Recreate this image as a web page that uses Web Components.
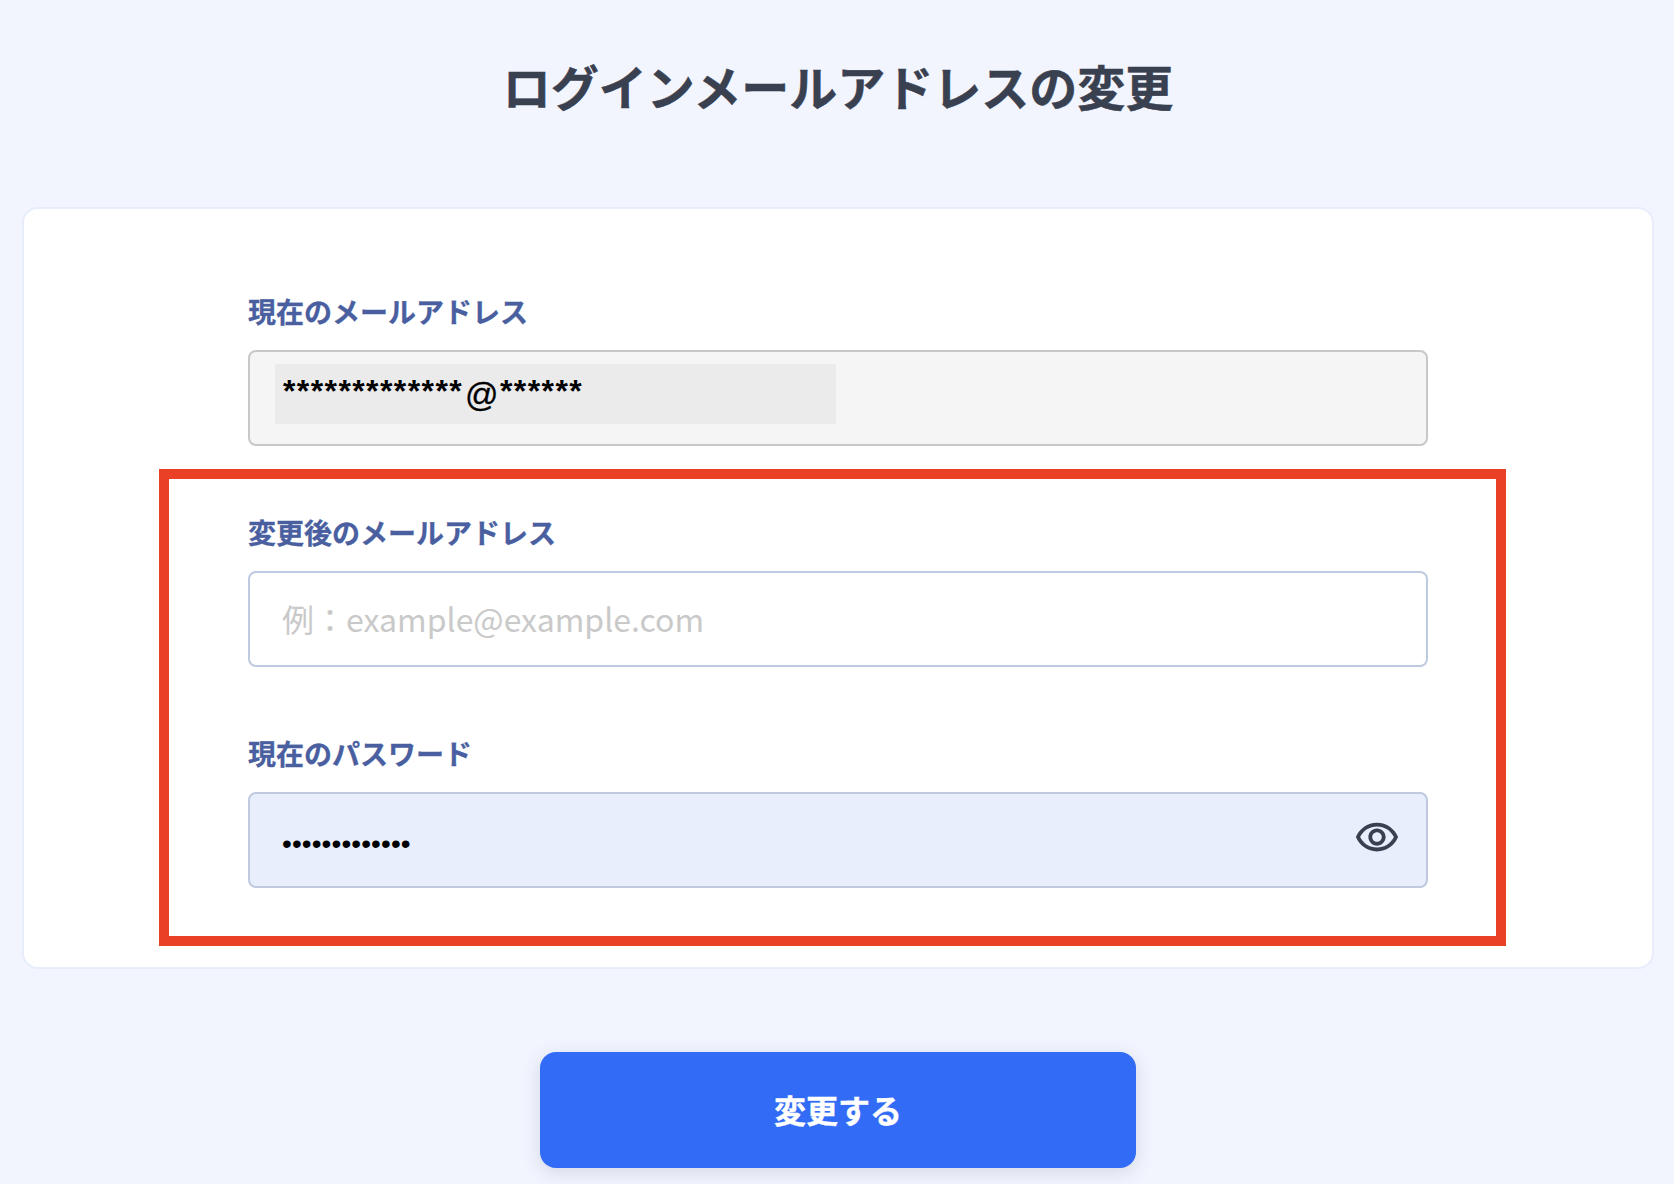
<!DOCTYPE html>
<html lang="ja">
<head>
<meta charset="utf-8">
<title>ログインメールアドレスの変更</title>
<style>
  html, body { margin: 0; background: #f2f5fe; }
  body { font-family: "Noto Sans CJK JP", "Noto Sans", sans-serif; }
  .at { margin-left: 2px; font-size: 33px; vertical-align: -4px; font-weight: 400; -webkit-text-stroke: .3px #000; }
</style>
</head>
<body>
<mail-change-page>
  <form-card>
    <form-field label="現在のメールアドレス" variant="disabled">
      <span class="masked">*************<span class="at">@</span>******</span>
    </form-field>
    <red-highlight>
      <form-field label="変更後のメールアドレス" variant="empty">例：example@example.com</form-field>
      <form-field label="現在のパスワード" variant="filled" eye>•••••••••••••</form-field>
    </red-highlight>
  </form-card>
  <primary-button>変更する</primary-button>
</mail-change-page>

<script>
class MailChangePage extends HTMLElement {
  constructor() {
    super();
    this.attachShadow({ mode: "open" });
    this.shadowRoot.innerHTML = `
    <style>
    :host {
      display: flex;
      flex-direction: column;
      align-items: center;
      height: 1184px;
      overflow: hidden;
      background: #f2f5fe;
    }
    h1 {
      margin: 49px 0 86px 2px;
      font-size: 48px;
      line-height: 72px;
      font-weight: 700;
      color: #394050;
      -webkit-text-stroke: .5px #394050;
    }
    </style>
    <h1>ログインメールアドレスの変更</h1>
    <slot></slot>`;
  }
}

class FormCard extends HTMLElement {
  constructor() {
    super();
    this.attachShadow({ mode: "open" });
    this.shadowRoot.innerHTML = `
    <style>
    :host {
      display: block;
      box-sizing: border-box;
      width: 1632px;
      height: 762px;
      margin-left: 2px;
      padding: 83px 224px 21px;
      background: #fff;
      border: 2px solid #e8edfb;
      border-radius: 16px;
    }
    </style>
    <slot></slot>`;
  }
}

class RedHighlight extends HTMLElement {
  constructor() {
    super();
    this.attachShadow({ mode: "open" });
    this.shadowRoot.innerHTML = `
    <style>
    :host {
      display: flex;
      flex-direction: column;
      gap: 67px;
      margin: 23px -78px 0 -89px;
      padding: 34px 68px 48px 79px;
      border: 10px solid #ea4025;
    }
    </style>
    <slot></slot>`;
  }
}

class FormField extends HTMLElement {
  constructor() {
    super();
    this.attachShadow({ mode: "open" });
    const eye = this.hasAttribute("eye") ? `
      <svg class="eye" viewBox="0 0 24 24" fill="#394050">
        <path d="M12 6.5c3.79 0 7.17 2.13 8.82 5.5-1.65 3.37-5.02 5.5-8.82 5.5S4.83 15.37 3.18 12C4.83 8.63 8.21 6.5 12 6.5m0-2C7 4.5 2.73 7.61 1 12c1.73 4.39 6 7.5 11 7.5s9.27-3.11 11-7.5c-1.73-4.39-6-7.5-11-7.5zm0 5c1.38 0 2.5 1.12 2.5 2.5s-1.12 2.5-2.5 2.5-2.5-1.12-2.5-2.5 1.12-2.5 2.5-2.5m0-2c-2.48 0-4.5 2.02-4.5 4.5s2.02 4.5 4.5 4.5 4.5-2.02 4.5-4.5-2.02-4.5-4.5-4.5z"/>
      </svg>` : "";
    this.shadowRoot.innerHTML = `
    <style>
    :host { display: block; }
    label {
      display: block;
      height: 40px;
      margin-bottom: 18px;
      font-size: 28px;
      line-height: 38px;
      font-weight: 700;
      color: #4a5f9f;
      -webkit-text-stroke: .3px #4a5f9f;
    }
    .box {
      display: flex;
      align-items: center;
      box-sizing: border-box;
      height: 96px;
      padding: 0 32px;
      border: 2px solid #bfc9df;
      border-radius: 8px;
      background: #fff;
    }
    .value {
      flex: 1;
      font-size: 32px;
      line-height: 46px;
      margin-bottom: 2px;
      color: #c9c9c9;
    }
    :host([variant="disabled"]) .box {
      padding: 0 0 0 25px;
      background: #f5f5f5;
      border-color: #c8c8c8;
    }
    :host([variant="disabled"]) .value {
      flex: none;
      box-sizing: border-box;
      width: 561px;
      height: 60px;
      margin-bottom: 8px;
      padding: 0 8px;
      background: #ebebeb;
      color: #000;
      font-family: "Liberation Sans", sans-serif;
      font-weight: 700;
      line-height: 54px;
      letter-spacing: 1.4px;
      white-space: nowrap;
    }
    :host([variant="filled"]) .box { background: #e8eefc; }
    :host([variant="filled"]) .value {
      color: #000;
      font-family: "Liberation Sans", sans-serif;
      font-size: 28px;
      letter-spacing: .1px;
      margin-bottom: 0;
      padding-top: 8px;
    }
    .eye {
      flex: none;
      width: 46px;
      height: 46px;
      margin: 0 -6px 6px 0;
    }
    </style>
    <label>${this.getAttribute("label")}</label>
    <div class="box">
      <div class="value"><slot></slot></div>${eye}
    </div>`;
  }
}

class PrimaryButton extends HTMLElement {
  constructor() {
    super();
    this.attachShadow({ mode: "open" });
    this.shadowRoot.innerHTML = `
    <style>
    :host {
      display: flex;
      justify-content: center;
      align-items: center;
      box-sizing: border-box;
      width: 596px;
      height: 116px;
      margin: 83px 0 0 2px;
      padding-bottom: 2px;
      background: #316bf6;
      border-radius: 16px;
      box-shadow: 0 4px 18px rgba(50, 60, 100, .16);
      color: #fff;
      font-size: 32px;
      font-weight: 700;
      -webkit-text-stroke: .4px #fff;
    }
    </style>
    <slot></slot>`;
  }
}

customElements.define("mail-change-page", MailChangePage);
customElements.define("form-card", FormCard);
customElements.define("red-highlight", RedHighlight);
customElements.define("form-field", FormField);
customElements.define("primary-button", PrimaryButton);
</script>
</body>
</html>
